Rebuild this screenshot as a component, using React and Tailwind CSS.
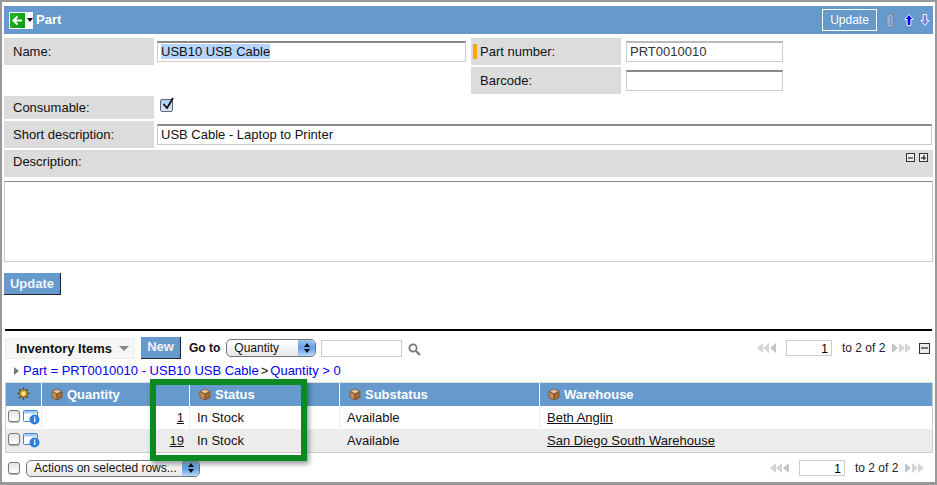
import React from 'react';

const font = { fontFamily: '"Liberation Sans", Arial, sans-serif' };

function Cube() {
  return (
    <svg width="12" height="13" viewBox="0 0 12 13" className="shrink-0">
      <path d="M6 1 L11 3.5 L6 6 L1 3.5 Z" fill="#e8c49a" stroke="#6b4a2a" strokeWidth="0.7" />
      <path d="M1 3.5 L6 6 L6 12 L1 9.5 Z" fill="#c98d52" stroke="#6b4a2a" strokeWidth="0.7" />
      <path d="M11 3.5 L6 6 L6 12 L11 9.5 Z" fill="#a86a34" stroke="#6b4a2a" strokeWidth="0.7" />
    </svg>
  );
}

function Gear() {
  return (
    <svg width="13" height="13" viewBox="0 0 13 13">
      <g stroke="#5b4a10" strokeWidth="1.4" strokeLinecap="round">
        <path d="M6.5 1v11M1 6.5h11M2.6 2.6l7.8 7.8M10.4 2.6l-7.8 7.8" />
      </g>
      <circle cx="6.5" cy="6.5" r="3.8" fill="#e8b830" stroke="#5b4a10" strokeWidth="0.8" />
      <circle cx="6.5" cy="6.5" r="1.5" fill="#fff3b0" />
    </svg>
  );
}

function InfoWindow() {
  return (
    <svg width="17" height="15" viewBox="0 0 17 15" className="shrink-0">
      <rect x="0.5" y="0.5" width="14" height="11" rx="1" fill="#fff" stroke="#3f86d8" />
      <rect x="1" y="1" width="13" height="2.5" fill="#a9cdf2" />
      <circle cx="11.5" cy="9.5" r="5" fill="#2f80d8" />
      <rect x="11" y="8.5" width="1.4" height="3.5" fill="#fff" />
      <rect x="11" y="6.6" width="1.4" height="1.3" fill="#fff" />
    </svg>
  );
}

function CheckBox() {
  return (
    <span className="block w-[12px] h-[12px] rounded-[3px] border border-[#777] bg-gradient-to-b from-[#e4e4e4] to-white shadow-[0_1px_1px_rgba(0,0,0,0.3)] shrink-0" />
  );
}

function Pager({ flip }) {
  return (
    <svg width="20" height="12" viewBox="0 0 20 12" className={flip ? 'shrink-0 rotate-180' : 'shrink-0'}>
      <path d="M7 1 L1 6 L7 11 Z M13 1 L7 6 L13 11 Z" fill="#d4d4d4" />
      <path d="M20 1 L14 6 L20 11 Z" fill="#c4c4c4" />
    </svg>
  );
}

function PagerBlock() {
  return (
    <div className="flex items-center">
      <Pager />
      <div className="w-[46px] h-[16px] ml-[10px] border border-[#ccc] bg-white text-right pr-[3px] text-[12px] leading-[16px] text-black">1</div>
      <span className="ml-[10px] w-[42px] text-[12px] leading-[14px] whitespace-nowrap text-[#222]">to 2 of 2</span>
      <div className="ml-[8px]"><Pager flip /></div>
    </div>
  );
}

function SmallBox({ plus, size = 'w-[9px] h-[9px]' }) {
  return (
    <span className={`relative block ${size} border border-[#333] bg-[#eee]`}>
      <span className="absolute left-[1px] right-[1px] top-1/2 h-px -translate-y-1/2 bg-black" />
      {plus && <span className="absolute top-[1px] bottom-[1px] left-1/2 w-px -translate-x-1/2 bg-black" />}
    </span>
  );
}

function Stepper() {
  return (
    <span className="flex flex-col items-center justify-center gap-[2px] h-full rounded-r-[5px] bg-gradient-to-b from-[#9cc4f0] via-[#5f9ee6] to-[#b8d8f8]">
      <span className="w-0 h-0 border-x-[3px] border-x-transparent border-b-[4px] border-b-[#111]" />
      <span className="w-0 h-0 border-x-[3px] border-x-transparent border-t-[4px] border-t-[#111]" />
    </span>
  );
}

function Label({ children, marker, top }) {
  return (
    <div className={`relative flex items-center h-full bg-[#dcdcdc] pl-[9px] text-[13px] text-[#111] ${top ? 'pb-[4px]' : ''}`}>
      {marker && <span className="absolute left-[2px] top-[6px] w-[4px] h-[15px] bg-[#ffa500]" />}
      {children}
    </div>
  );
}

const boxClass = 'h-[21px] border border-[#ccc] border-t-2 border-t-[#888] bg-white px-[3px] text-[13px] leading-[17px] text-[#111]';

const rows = [
  { qty: '1', status: 'In Stock', sub: 'Available', wh: 'Beth Anglin', bg: 'bg-white' },
  { qty: '19', status: 'In Stock', sub: 'Available', wh: 'San Diego South Warehouse', bg: 'bg-[#ececec]' },
];

const cols = 'grid grid-cols-[36px_148px_150px_200px_1fr]';

export default function App() {
  return (
    <div style={font} className="relative w-[937px] h-[485px] overflow-hidden bg-white border-2 border-[#999] border-b-[3px] text-[#111] pt-[4px] px-[2px]">
      {/* Part header */}
      <div className="flex items-center h-[28px] w-[929px] bg-[#6699cc] pl-[5px] pr-[3px]">
        <span className="flex items-center w-[24px] h-[17px] bg-white">
          <span className="flex items-center justify-center w-[15px] h-[15px] ml-px bg-gradient-to-br from-[#22b722] to-[#0a9a0a]">
            <svg width="11" height="11" viewBox="0 0 11 11">
              <path d="M5.5 1.5 L1.5 5.5 L5.5 9.5 M1.5 5.5 H10" fill="none" stroke="#fff" strokeWidth="2" />
            </svg>
          </span>
          <span className="ml-[2px] w-0 h-0 border-x-[3.5px] border-x-transparent border-t-[4px] border-t-black" />
        </span>
        <span className="ml-[3px] text-[13px] font-bold text-white">Part</span>
        <div className="ml-auto flex items-center">
          <span className="w-[55px] h-[22px] border border-white text-center text-[12px] leading-[20px] text-white">Update</span>
          <svg width="10" height="15" viewBox="0 0 10 15" className="ml-[8px]">
            <path d="M3 4.5v6.5a2 2 0 0 0 4 0V3.5a1.4 1.4 0 0 0-2.8 0v7" fill="none" stroke="#aab6c4" strokeWidth="1.1" />
            <path d="M1.2 4v7.2a3.8 3.8 0 0 0 7.6 0V3a3 3 0 0 0-5-2" fill="none" stroke="#7d8a98" strokeWidth="1.1" />
          </svg>
          <svg width="10" height="14" viewBox="0 0 11 14" className="ml-[9px]">
            <path d="M5.5 1 L10 6.5 H7.5 V13 H3.5 V6.5 H1 Z" fill="#0000ee" stroke="#fff" />
          </svg>
          <svg width="10" height="14" viewBox="0 0 11 14" className="ml-[6px]">
            <path d="M5.5 13 L10 7.5 H7.5 V1 H3.5 V7.5 H1 Z" fill="#7d7dd8" stroke="#fff" />
          </svg>
        </div>
      </div>

      {/* Form */}
      <div className="w-[929px] mt-[4px] grid grid-cols-[150px_317px_150px_1fr] grid-rows-[27px_27px] gap-y-[2px]">
        <Label>Name:</Label>
        <div className="flex items-center pl-[3px] pr-[5px]">
          <div className={`${boxClass} w-full`}>
            <span className="bg-[#b5d5ff]">USB10 USB Cable</span>
          </div>
        </div>
        <Label marker>Part number:</Label>
        <div className="flex items-center pl-[5px]">
          <div className={`${boxClass} w-[157px] bg-[#f4f4f4] border-t-[#bbb] text-[#333]`}>PRT0010010</div>
        </div>
        <div className="col-span-2" />
        <Label>Barcode:</Label>
        <div className="flex items-center pl-[5px]">
          <div className={`${boxClass} w-[157px]`} />
        </div>
      </div>

      <div className="w-[929px] mt-[2px] flex h-[23px]">
        <div className="w-[150px]"><Label>Consumable:</Label></div>
        <div className="ml-[6px] mt-[3px] relative w-[13px] h-[13px] rounded-[2px] border border-[#667] bg-gradient-to-b from-[#a8cdf5] to-[#d6e8fb]">
          <svg width="14" height="16" viewBox="0 0 14 16" className="absolute -top-[4px] left-0">
            <path d="M2.5 8 L6 12 L12 2" fill="none" stroke="#111" strokeWidth="1.8" />
          </svg>
        </div>
      </div>

      <div className="w-[929px] mt-[2px] flex h-[27px]">
        <div className="w-[150px]"><Label>Short description:</Label></div>
        <div className="flex items-center flex-1 pl-[3px] pr-px">
          <div className={`${boxClass} w-full`}>USB Cable - Laptop to Printer</div>
        </div>
      </div>

      <div className="relative w-[929px] mt-[2px] h-[27px]">
        <Label top>Description:</Label>
        <div className="absolute top-[3px] right-[5px] flex gap-[4px]">
          <SmallBox />
          <SmallBox plus />
        </div>
      </div>

      <div className="w-[929px] h-[81px] mt-[4px] border border-[#ccc] border-t-[#888]" />

      <div className="mt-[11px] w-[57px] h-[22px] bg-[#6699cc] border-r border-b border-[#223] text-center text-[13px] font-bold leading-[21px] text-[#eef4fa]">Update</div>

      {/* Inventory items */}
      <div className="mt-[34px] ml-px w-[927px] h-[2px] bg-black" />

      <div className="flex items-center ml-px w-[927px] h-[22px] mt-[6px]">
        <div className="flex items-center w-[130px] h-[21px] bg-[#f6f6f6] border border-[#eee] pl-[10px] pt-px text-[13px] font-bold whitespace-nowrap">
          Inventory Items
          <span className="ml-[7px] w-0 h-0 border-x-[5px] border-x-transparent border-t-[5px] border-t-[#888]" />
        </div>
        <div className="ml-[6px] w-[40px] h-[22px] bg-[#6699cc] border-r border-b border-[#223] text-center text-[13px] font-bold leading-[20px] text-[#eef4fa]">New</div>
        <span className="ml-[8px] text-[12px] font-bold">Go to</span>
        <div className="ml-[6px] flex w-[90px] h-[18px] rounded-[5px] border border-[#777] bg-gradient-to-b from-white to-[#e8e8e8]">
          <span className="flex-1 pl-[7px] text-[12px] leading-[16px]">Quantity</span>
          <span className="w-[17px]"><Stepper /></span>
        </div>
        <div className="ml-[5px] w-[81px] h-[17px] border border-[#ccc] bg-white" />
        <svg width="13" height="13" viewBox="0 0 13 13" className="ml-[6px] mt-[2px]">
          <circle cx="5" cy="5" r="3.6" fill="none" stroke="#777" strokeWidth="1.8" />
          <path d="M8 8 L12 12" stroke="#777" strokeWidth="2.2" />
        </svg>
        <div className="ml-auto flex items-center">
          <PagerBlock />
          <span className="ml-[7px] mr-[2px]"><SmallBox size="w-[11px] h-[11px]" /></span>
        </div>
      </div>

      <div className="flex items-center ml-[10px] mt-[4px] h-[16px] text-[13px] text-[#0000ee]">
        <span className="w-0 h-0 border-y-[4px] border-y-transparent border-l-[5px] border-l-[#777]" />
        <span className="ml-[4px]">Part = PRT0010010 - USB10 USB Cable</span>
        <span className="mx-[2px] text-[#111]">&gt;</span>
        <span>Quantity &gt; 0</span>
      </div>

      {/* Table */}
      <div className="ml-px mt-[3px] w-[928px] border border-[#ccc] border-t-[#ddd]">
        <div className={`${cols} h-[23px] bg-[#6699cc] text-[13px] font-bold text-white`}>
          <div className="flex items-center justify-center border-r border-white pb-[2px]"><Gear /></div>
          {['Quantity', 'Status', 'Substatus'].map((h) => (
            <div key={h} className="flex items-center gap-[4px] pl-[9px] border-r border-white">
              <Cube />
              <span>{h}</span>
            </div>
          ))}
          <div className="flex items-center gap-[4px] pl-[8px]">
            <Cube />
            <span>Warehouse</span>
          </div>
        </div>
        {rows.map((r) => (
          <div key={r.qty} className={`${cols} h-[23px] text-[13px] leading-[23px] ${r.bg}`}>
            <div className="flex items-start pl-[2px] pt-[4px] gap-[3px] border-r border-[#eee]">
              <CheckBox />
              <InfoWindow />
            </div>
            <div className="pr-[5px] text-right border-r border-[#eee]"><span className="underline">{r.qty}</span></div>
            <div className="pl-[7px] border-r border-[#eee]">{r.status}</div>
            <div className="pl-[7px] border-r border-[#eee]">{r.sub}</div>
            <div className="pl-[7px] underline">{r.wh}</div>
          </div>
        ))}
      </div>

      {/* Footer actions */}
      <div className="flex items-center ml-[4px] mt-[6px] w-[917px] h-[18px]">
        <CheckBox />
        <div className="ml-[6px] flex w-[174px] h-[17px] rounded-[5px] border border-[#777] bg-gradient-to-b from-white to-[#e8e8e8]">
          <span className="flex-1 pl-[7px] text-[12px] leading-[15px] whitespace-nowrap">Actions on selected rows...</span>
          <span className="w-[17px]"><Stepper /></span>
        </div>
        <div className="ml-auto"><PagerBlock /></div>
      </div>

      {/* Green highlight */}
      <div className="absolute left-[148px] top-[377px] w-[157px] h-[82px] border-[6px] border-[#0a8a20] shadow-[2px_3px_5px_rgba(0,0,0,0.4)]" />
    </div>
  );
}
